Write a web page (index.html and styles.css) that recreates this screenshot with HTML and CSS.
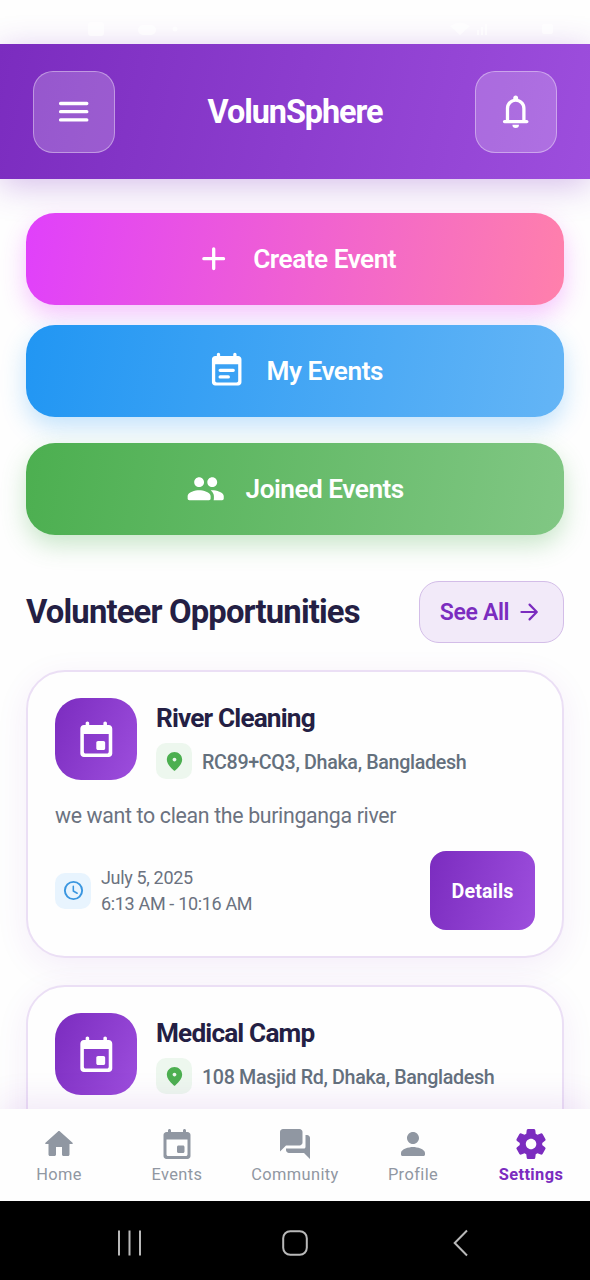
FILE: index.html
```html
<!DOCTYPE html>
<html lang="en">
<head>
<meta charset="utf-8">
<meta name="viewport" content="width=device-width, initial-scale=1">
<title>VolunSphere</title>
<link rel="stylesheet" href="styles.css">
</head>
<body>
<svg class="defs" aria-hidden="true">
  <symbol id="event" viewBox="0 0 24 24"><path d="M16 13h-3c-.55 0-1 .45-1 1v3c0 .55.45 1 1 1h3c.55 0 1-.45 1-1v-3c0-.55-.45-1-1-1zm0-10v1H8V3c0-.55-.45-1-1-1s-1 .45-1 1v1H5c-1.11 0-1.99.9-1.99 2L3 20c0 1.1.89 2 2 2h14c1.1 0 2-.9 2-2V6c0-1.1-.9-2-2-2h-1V3c0-.55-.45-1-1-1s-1 .45-1 1zm2 17H6c-.55 0-1-.45-1-1V9h14v10c0 .55-.45 1-1 1z"/></symbol>
  <symbol id="pin" viewBox="0 0 24 24"><path d="M12 2C7.8 2 4 5.22 4 10.2c0 3.18 2.45 6.92 7.34 11.23.38.33.95.33 1.33 0C17.55 17.12 20 13.38 20 10.2 20 5.22 16.2 2 12 2zm0 10c-1.1 0-2-.9-2-2s.9-2 2-2 2 .9 2 2-.9 2-2 2z"/></symbol>
</svg>
<div class="screen">
  <div class="status">
    <svg class="status-left" viewBox="0 0 140 16"><rect x="48" y="1" width="16" height="14" rx="3"/><rect x="98" y="4" width="18" height="10" rx="5"/><circle cx="135" cy="8" r="2.500"/></svg>
    <svg class="status-right" viewBox="0 0 110 16"><path d="M0 5q10-7 20 0l-10 9zM27 14V9h2v5zM31 14V6h2v8zM35 14V3h2v11z"/><rect x="92" y="3" width="11" height="10" rx="2"/></svg>
  </div>

  <header class="header">
    <button class="header-btn" aria-label="Menu">
      <svg class="icon-24 line" viewBox="0 0 24 24"><path d="M4 7h16M4 12h16M4 17h16"/></svg>
    </button>
    <h1 class="brand">VolunSphere</h1>
    <button class="header-btn" aria-label="Notifications">
      <svg class="icon-24" viewBox="0 0 24 24"><path fill-rule="evenodd" d="M5.200 19c-.55 0-1-.45-1-1s.45-1 1-1h.8v-7c0-1.38.42-2.61 1.25-3.69S9.17 4.54 10.5 4.2v-.5C10.500 2.870 11.170 2.200 12 2.200s1.500.670 1.500 1.500v.5c1.330.340 2.420 1.030 3.250 2.110S18 8.620 18 10v7h.8c.55 0 1 .45 1 1s-.45 1-1 1H5.200zM8 17h8v-7a4 4 0 0 0-8 0v7zM10 20h4a2 2 0 0 1-4 0z"/></svg>
    </button>
  </header>

  <main class="content">
    <div class="actions">
      <button class="action create">
        <svg class="icon-24 line" viewBox="0 0 24 24"><path d="M12 6v12M6 12h12"/></svg>
        <span>Create Event</span>
      </button>
      <button class="action mine">
        <svg class="icon-24" viewBox="0 0 24 24"><path fill-rule="evenodd" d="M8 10.800h8a1 1 0 0 1 0 2H8a1 1 0 0 1 0-2zM8 14.800h5a1 1 0 0 1 0 2H8a1 1 0 0 1 0-2zM16 2v1H8V2c0-.55-.45-1-1-1s-1 .45-1 1v1H5c-1.11 0-2 .9-2 2v14c0 1.1.89 2 2 2h14c1.1 0 2-.9 2-2V5c0-1.1-.9-2-2-2h-1V2c0-.55-.45-1-1-1s-1 .45-1 1zM18 19.200H6c-.55 0-1-.45-1-1V8h14v10.200c0 .55-.45 1-1 1z"/></svg>
        <span>My Events</span>
      </button>
      <button class="action joined">
        <svg class="icon-24" viewBox="0 0 24 24"><path d="M16 11c1.66 0 2.99-1.34 2.99-3S17.66 5 16 5s-3 1.34-3 3 1.34 3 3 3zm-8 0c1.66 0 2.99-1.34 2.99-3S9.66 5 8 5 5 6.34 5 8s1.34 3 3 3zm0 2c-2.33 0-7 1.17-7 3.500V18c0 .55.45 1 1 1h12c.55 0 1-.45 1-1v-1.500c0-2.330-4.670-3.500-7-3.500zm8 0c-.29 0-.62.020-.97.050 1.160.840 1.970 1.970 1.970 3.450V18c0 .35-.070.690-.180 1H22c.55 0 1-.45 1-1v-1.500c0-2.330-4.670-3.500-7-3.500z"/></svg>
        <span>Joined Events</span>
      </button>
    </div>

    <div class="section-head">
      <h2 class="section-title">Volunteer Opportunities</h2>
      <button class="see-all">
        <span>See All</span>
        <svg class="icon-16 line" viewBox="0 0 24 24"><path d="M5 12h14M12.500 5.200L19.200 12l-6.700 6.800"/></svg>
      </button>
    </div>

    <article class="card">
      <div class="card-top">
        <div class="tile"><svg class="icon-26"><use href="#event"/></svg></div>
        <div class="card-info">
          <h3 class="card-title">River Cleaning</h3>
          <div class="place">
            <span class="chip green"><svg class="icon-14"><use href="#pin"/></svg></span>
            <span class="place-name">RC89+CQ3, Dhaka, Bangladesh</span>
          </div>
        </div>
      </div>
      <p class="desc">we want to clean the buringanga river</p>
      <div class="card-foot">
        <span class="chip blue"><svg class="icon-14 line" viewBox="0 0 24 24"><circle cx="12" cy="12" r="9"/><path class="hands" d="M11.800 7.500v5l4 2.400"/></svg></span>
        <div class="when"><div>July 5, 2025</div><div>6:13 AM - 10:16 AM</div></div>
        <button class="details">Details</button>
      </div>
    </article>

    <article class="card">
      <div class="card-top">
        <div class="tile"><svg class="icon-26"><use href="#event"/></svg></div>
        <div class="card-info">
          <h3 class="card-title">Medical Camp</h3>
          <div class="place">
            <span class="chip green"><svg class="icon-14"><use href="#pin"/></svg></span>
            <span class="place-name">108 Masjid Rd, Dhaka, Bangladesh</span>
          </div>
        </div>
      </div>
      <div class="card-rest"></div>
    </article>
  </main>

  <nav class="tabs">
    <a class="tab"><svg class="icon-22" viewBox="0 0 24 24"><path d="M10 19v-5h4v5c0 .55.45 1 1 1h3c.55 0 1-.45 1-1v-7h1.700c.46 0 .68-.57.33-.87L12.670 3.600c-.38-.34-.96-.34-1.340 0l-8.360 7.530c-.34.3-.13.87.33.87H5v7c0 .55.45 1 1 1h3c.55 0 1-.45 1-1z"/></svg><span>Home</span></a>
    <a class="tab"><svg class="icon-22"><use href="#event"/></svg><span>Events</span></a>
    <a class="tab"><svg class="icon-22" viewBox="0 0 24 24"><path d="M20 6h-1v8c0 .55-.45 1-1 1H6v1c0 1.100.9 2 2 2h10l4 4V8c0-1.100-.9-2-2-2zm-3 5V4c0-1.100-.9-2-2-2H4c-1.100 0-2 .9-2 2v13l4-4h9c1.100 0 2-.9 2-2z"/></svg><span>Community</span></a>
    <a class="tab"><svg class="icon-22" viewBox="0 0 24 24"><path d="M12 12c2.210 0 4-1.790 4-4s-1.790-4-4-4-4 1.790-4 4 1.790 4 4 4zm0 2c-2.670 0-8 1.340-8 4v1c0 .55.45 1 1 1h14c.55 0 1-.45 1-1v-1c0-2.660-5.330-4-8-4z"/></svg><span>Profile</span></a>
    <a class="tab active"><svg class="icon-22" viewBox="0 0 24 24"><path d="M19.500 12c0-.23-.01-.45-.03-.68l1.860-1.410c.4-.3.51-.86.26-1.300l-1.870-3.230c-.25-.44-.79-.62-1.250-.42l-2.150.91c-.37-.26-.76-.49-1.170-.68l-.29-2.310c-.06-.5-.49-.88-.99-.88h-3.730c-.51 0-.94.38-1 .88l-.29 2.310c-.41.19-.8.42-1.170.68l-2.150-.91c-.46-.2-1-.02-1.250.42L2.410 8.620c-.25.44-.14.99.26 1.300l1.860 1.410c-.02.22-.03.44-.03.67s.01.45.03.68l-1.860 1.410c-.4.3-.51.86-.26 1.300l1.870 3.230c.25.44.79.62 1.250.42l2.150-.91c.37.26.76.49 1.170.68l.29 2.310c.06.5.49.88.99.88h3.730c.5 0 .93-.38.99-.88l.29-2.310c.41-.19.8-.42 1.170-.68l2.150.91c.46.2 1 .02 1.250-.42l1.870-3.230c.25-.44.14-.99-.26-1.300l-1.860-1.410c.03-.23.04-.45.04-.68zm-7.460 3.500c-1.930 0-3.500-1.570-3.500-3.500s1.570-3.500 3.500-3.500 3.500 1.570 3.500 3.500-1.570 3.500-3.500 3.500z"/></svg><span>Settings</span></a>
  </nav>

  <div class="system-bar">
    <svg class="sys" viewBox="0 0 36 36"><path d="M8 5.500v25M18.500 5.500v25M29 5.500v25"/></svg>
    <svg class="sys" viewBox="0 0 36 36"><rect x="6.200" y="6.200" width="23.600" height="23.600" rx="7"/></svg>
    <svg class="sys" viewBox="0 0 36 36"><path d="M24 5.500L11.700 18 24 30.500"/></svg>
  </div>
</div>
</body>
</html>
```
FILE: styles.css
```css
* { box-sizing: border-box; }

body {
  margin: 0;
  background: #fefefe;
  font-family: Roboto, "Liberation Sans", sans-serif;
}

button {
  font-family: inherit;
  border: 0;
  padding: 0;
}

h1, h2, h3, p { margin: 0; }

svg { display: block; fill: currentColor; flex: none; }

.defs { position: absolute; width: 0; height: 0; }

.line {
  fill: none;
  stroke: currentColor;
  stroke-width: 2;
  stroke-linecap: round;
  stroke-linejoin: round;
}

.icon-14 { width: 23px; height: 23px; }
.icon-16 { width: 26px; height: 26px; }
.icon-22 { width: 36px; height: 36px; }
.icon-24 { width: 39.4px; height: 39.4px; }
.icon-26 { width: 42.6px; height: 42.6px; }

.screen {
  width: 590px;
  height: 1280px;
  display: flex;
  flex-direction: column;
  overflow: hidden;
  white-space: nowrap;
}

.status {
  position: relative;
  z-index: 1;
  flex: none;
  height: 44px;
  padding: 21px 30px 0 40px;
  display: flex;
  justify-content: space-between;
  color: rgba(255, 255, 255, 0.6);
}

.status-left { width: 140px; height: 16px; }
.status-right { width: 110px; height: 16px; }

.header {
  flex: none;
  height: 135px;
  padding: 0 33px;
  display: flex;
  align-items: center;
  justify-content: space-between;
  color: #fff;
  background: linear-gradient(102.9deg, #7b2cbf, #9d4edd);
  box-shadow: 0 7px 32px rgba(123, 44, 191, 0.3);
}

.header-btn {
  width: 82px;
  height: 82px;
  display: grid;
  place-items: center;
  color: #fff;
  background: rgba(255, 255, 255, 0.2);
  border: 1px solid rgba(255, 255, 255, 0.38);
  border-radius: 20px;
}

.brand {
  font-size: 32.4px;
  font-weight: 700;
  letter-spacing: -1.05px;
}

.content {
  flex: 1;
  min-height: 0;
  overflow: hidden;
  padding: 34px 26px 0;
}

.actions { display: flex; flex-direction: column; }

.action {
  height: 92px;
  border-radius: 29px;
  display: flex;
  align-items: center;
  justify-content: center;
  gap: 20px;
  color: #fff;
  font-size: 26.2px;
  font-weight: 600;
  letter-spacing: -0.48px;
}

.create {
  background: linear-gradient(99.7deg, #e040fb, #ff80ab);
  box-shadow: 0 10px 25px rgba(224, 64, 251, 0.3);
}

.mine {
  margin-top: 20px;
  background: linear-gradient(99.7deg, #2196f3, #64b5f6);
  box-shadow: 0 10px 25px rgba(33, 150, 243, 0.27);
}

.joined {
  margin-top: 26px;
  background: linear-gradient(99.7deg, #4caf50, #81c784);
  box-shadow: 0 10px 25px rgba(76, 175, 80, 0.3);
}

.section-head {
  height: 62px;
  margin-top: 46px;
  display: flex;
  align-items: center;
  justify-content: space-between;
}

.section-title {
  color: #241f44;
  font-size: 32.8px;
  font-weight: 700;
  letter-spacing: -0.84px;
}

.see-all {
  width: 145px;
  height: 62px;
  padding-right: 1px;
  display: flex;
  align-items: center;
  justify-content: center;
  gap: 7px;
  color: #7b2cbf;
  background: #f2eaf9;
  border: 1px solid #d3bde8;
  border-radius: 20px;
  font-size: 23px;
  font-weight: 600;
  letter-spacing: -0.33px;
}

.card {
  margin-top: 27px;
  padding: 26px 27px;
  background: #fefefe;
  border: 2px solid #ebdff5;
  border-radius: 39px;
  box-shadow: 0 8px 33px rgba(123, 44, 191, 0.08);
}

.card-top { display: flex; gap: 19px; height: 82px; }

.tile {
  width: 82px;
  height: 82px;
  display: grid;
  place-items: center;
  color: #fff;
  background: linear-gradient(115deg, #7b2cbf, #9d4edd);
  border-radius: 26px;
}

.card-title {
  height: 45px;
  color: #241f44;
  font-size: 26.2px;
  line-height: 40px;
  font-weight: 700;
  letter-spacing: -0.84px;
}

.place { display: flex; align-items: center; gap: 10px; }

.place-name {
  padding-top: 2px;
  color: #64707d;
  font-size: 19.7px;
  font-weight: 500;
  letter-spacing: -0.34px;
}

.chip {
  width: 36px;
  height: 36px;
  display: grid;
  place-items: center;
  border-radius: 10px;
}

.green { color: #4caf50; background: #edf7ee; }
.blue { color: #3a96e0; background: #e8f4fe; }
.hands { stroke-width: 1.6; }

.desc {
  margin-top: 20px;
  color: #6b7280;
  font-size: 21.3px;
  line-height: 31px;
  letter-spacing: -0.32px;
}

.card-foot {
  margin-top: 20px;
  height: 79px;
  display: flex;
  align-items: center;
  gap: 10px;
}

.when {
  flex: 1;
  padding-top: 1px;
  color: #6b7280;
  font-size: 18px;
  line-height: 26px;
  letter-spacing: -0.34px;
}

.details {
  width: 105px;
  height: 79px;
  padding-top: 1px;
  color: #fff;
  background: linear-gradient(105deg, #7b2cbf, #9d4edd);
  border-radius: 16px;
  font-size: 19.7px;
  font-weight: 700;
  letter-spacing: 0.1px;
}

.card-rest { height: 176px; }

.tabs {
  position: relative;
  flex: none;
  height: 92px;
  padding-top: 17px;
  display: grid;
  grid-template-columns: repeat(5, 1fr);
  background: #fefefe;
  box-shadow: 0 -8px 33px rgba(123, 44, 191, 0.1);
}

.tab {
  display: flex;
  flex-direction: column;
  align-items: center;
  gap: 3px;
  color: #9097a2;
  font-size: 16.4px;
  line-height: 20px;
  letter-spacing: 0.4px;
}

.active { color: #7b2cbf; font-weight: 700; }

.system-bar {
  position: relative;
  flex: none;
  height: 79px;
  padding: 4px 46.5px 0;
  display: grid;
  grid-template-columns: repeat(3, 1fr);
  place-items: center;
  background: #000;
}

.sys {
  width: 36px;
  height: 36px;
  fill: none;
  stroke: #b9b9b9;
  stroke-width: 2;
}
```
